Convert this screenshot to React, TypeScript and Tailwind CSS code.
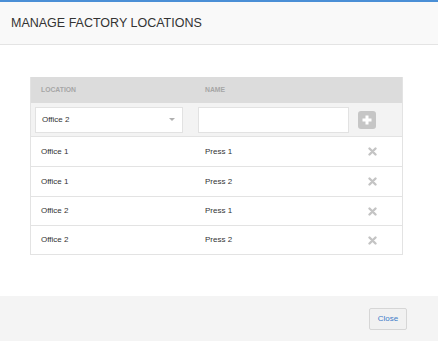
import React from 'react';

const ROWS = [
  { location: 'Office 1', name: 'Press 1' },
  { location: 'Office 1', name: 'Press 2' },
  { location: 'Office 2', name: 'Press 1' },
  { location: 'Office 2', name: 'Press 2' },
];

function CloseX() {
  return (
    <svg width="9" height="9" viewBox="0 0 9 9" className="text-[#c4c4c4]">
      <path d="M1.5 1.5 L7.5 7.5 M7.5 1.5 L1.5 7.5" stroke="currentColor" strokeWidth="2.4" strokeLinecap="round" />
    </svg>
  );
}

export default function App() {
  return (
    <div
      className="w-[438px] h-[341px] flex flex-col bg-white border-t-2 border-[#4a8fd6] overflow-hidden"
      style={{ fontFamily: '"Liberation Sans", Arial, sans-serif' }}
    >
      <div className="h-[43px] flex items-center px-[11px] bg-[#f9f9f9] border-b border-[#e4e4e4]">
        <h1 className="text-[12.5px] text-[#333]">MANAGE FACTORY LOCATIONS</h1>
      </div>

      <div className="flex-1 pt-[32px] pl-[30px]">
        <div className="w-[373px] border-x border-b border-[#e3e3e3]">
          <div className="h-[26px] grid grid-cols-[164px_156px_1fr] items-center bg-[#dcdcdc] text-[6.8px] font-bold text-[#a6a6a6]">
            <span className="pl-[10px]">LOCATION</span>
            <span className="pl-[10px]">NAME</span>
            <span />
          </div>

          <div className="h-[33px] grid grid-cols-[164px_156px_1fr] items-center bg-[#f3f3f3]">
            <div className="pl-[4px]">
              <div className="w-[148px] h-[26px] bg-white border border-[#e2e2e2] flex items-center justify-between pl-[6px] pr-[7px] text-[8px] text-[#333]">
                <span>Office 2</span>
                <svg width="6" height="4" viewBox="0 0 6 4">
                  <path d="M0 0 L6 0 L3 3 Z" fill="#b0b0b0" />
                </svg>
              </div>
            </div>
            <div className="pl-[3px]">
              <div className="w-[151px] h-[26px] bg-white border border-[#e2e2e2]" />
            </div>
            <div className="pl-[7px]">
              <div className="w-[18px] h-[18px] rounded-[3px] bg-[#c6c6c6] flex items-center justify-center">
                <svg width="12" height="12" viewBox="0 0 12 12">
                  <path d="M6 1.5 V10.5 M1.5 6 H10.5" stroke="white" strokeWidth="3" />
                </svg>
              </div>
            </div>
          </div>

          {ROWS.map((row, i) => (
            <div
              key={i}
              className={`grid grid-cols-[164px_156px_1fr] items-center border-t border-[#e3e3e3] text-[8px] text-[#333] ${i < 2 ? 'h-[30px]' : 'h-[29px]'}`}
            >
              <span className="pl-[10px]">{row.location}</span>
              <span className="pl-[10px]">{row.name}</span>
              <span className="pl-[17px] flex items-center">
                <CloseX />
              </span>
            </div>
          ))}
        </div>
      </div>

      <div className="h-[45px] bg-[#f4f4f4] flex items-center justify-end pr-[31px]">
        <button className="w-[38px] h-[22px] bg-[#f1f1f1] border border-[#d6d6d6] rounded-[2px] text-[8px] text-[#3d7cc9]">
          Close
        </button>
      </div>
    </div>
  );
}
